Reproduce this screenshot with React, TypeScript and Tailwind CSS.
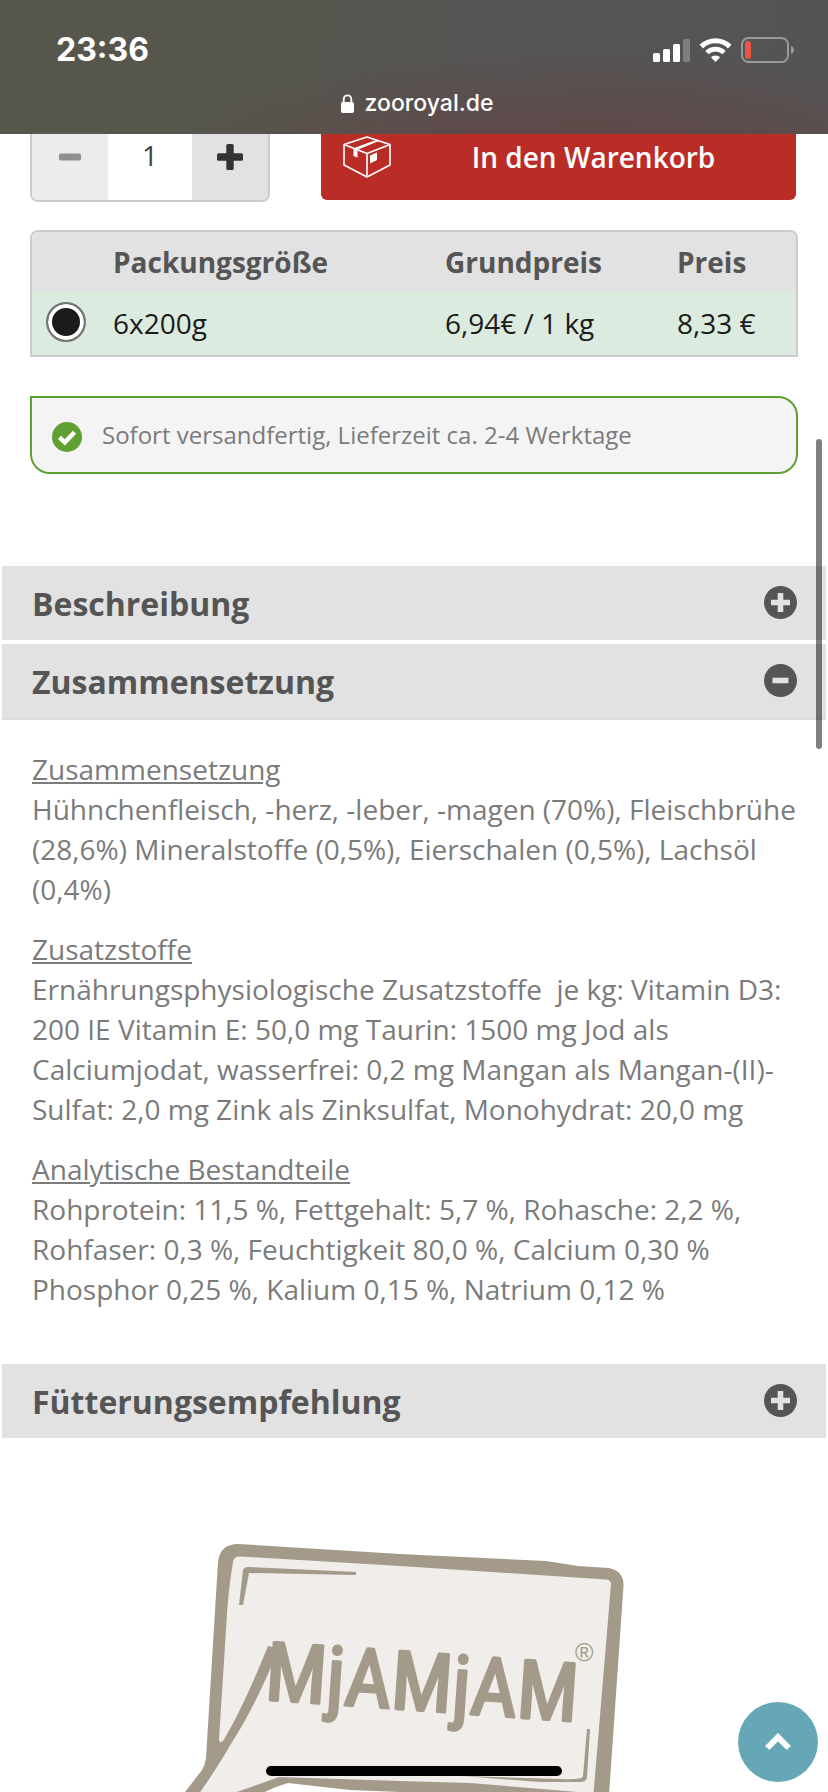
import { useState } from "react";
import type { ReactNode } from "react";

const SIZES = [{ id: "6x200g", label: "6x200g", basePrice: "6,94€ / 1 kg", price: "8,33 €" }];

const INGREDIENTS = [
  {
    title: "Zusammensetzung",
    text: "Hühnchenfleisch, -herz, -leber, -magen (70%), Fleischbrühe (28,6%) Mineralstoffe (0,5%), Eierschalen (0,5%), Lachsöl (0,4%)",
  },
  {
    title: "Zusatzstoffe",
    text: "Ernährungsphysiologische Zusatzstoffe \u00a0je kg: Vitamin D3: 200 IE Vitamin E: 50,0 mg Taurin: 1500 mg Jod als Calciumjodat, wasserfrei: 0,2 mg Mangan als Mangan-(II)-Sulfat: 2,0 mg Zink als Zinksulfat, Monohydrat: 20,0 mg",
  },
  {
    title: "Analytische Bestandteile",
    text: "Rohprotein: 11,5 %, Fettgehalt: 5,7 %, Rohasche: 2,2 %, Rohfaser: 0,3 %, Feuchtigkeit 80,0 %, Calcium 0,30 % Phosphor 0,25 %, Kalium 0,15 %, Natrium 0,12 %",
  },
];

function StatusBar() {
  return (
    <header className="sticky top-0 z-10 h-[134px] bg-[#565654] bg-[radial-gradient(ellipse_at_70%_120%,#634444_0%,transparent_50%),linear-gradient(100deg,#57564c_0%,#56564e_35%,#555555_60%,#545454_100%)] text-white font-['Inter',sans-serif]">
      <div className="flex items-center justify-between pl-14 pr-[34px] pt-[30px]">
        <span className="text-[32px] leading-10 font-bold">23:36</span>
        <div className="flex items-center gap-[9px]">
          <svg width="37" height="24" viewBox="0 0 37 24" fill="#fff" aria-hidden="true">
            <rect x="0" y="15" width="7" height="9" rx="1.5" />
            <rect x="10" y="11" width="7" height="13" rx="1.5" />
            <rect x="20" y="6" width="7" height="18" rx="1.5" />
            <rect x="30" y="1" width="7" height="23" rx="1.5" opacity="0.25" />
          </svg>
          <svg width="33" height="24" viewBox="0 0 33 24" fill="none" aria-hidden="true">
            <path d="M2.3 8.6a20.3 20.3 0 0 1 28.4 0" stroke="#fff" strokeWidth="5" />
            <path d="M8 14.6a12.2 12.2 0 0 1 17 0" stroke="#fff" strokeWidth="4.8" />
            <path d="M11.9 19.3a6.6 6.6 0 0 1 9.2 0L16.5 24Z" fill="#fff" />
          </svg>
          <svg width="53" height="26" viewBox="0 0 53 26" aria-hidden="true">
            <rect x="1" y="1" width="46" height="24" rx="6.5" fill="none" stroke="#9b9a9a" strokeWidth="2" />
            <rect x="4" y="4" width="6" height="18" rx="3" fill="#eb5545" />
            <path d="M50 9c4 1 4 7 0 8Z" fill="#9b9a9a" />
          </svg>
        </div>
      </div>
      <div className="mt-[17px] flex items-center justify-center gap-[11px] pl-1.5">
        <svg width="13" height="19" viewBox="0 0 13 19" aria-hidden="true">
          <rect x="0" y="8" width="13" height="11" rx="1.8" fill="#fff" />
          <path d="M2.7 9V5.2a3.8 3.8 0 0 1 7.6 0V9" fill="none" stroke="#fff" strokeWidth="1.9" />
        </svg>
        <span className="text-[23px] leading-8 font-medium">zooroyal.de</span>
      </div>
    </header>
  );
}

function BuyBox() {
  const [amount, setAmount] = useState(1);

  return (
    <div className="relative -mt-[22px] flex gap-[51px] pr-0.5">
      <div className="flex h-[90px] w-60 shrink-0 overflow-hidden rounded-lg border-2 border-[#cbcbcb]">
        <button
          type="button"
          aria-label="Menge verringern"
          onClick={() => setAmount(Math.max(1, amount - 1))}
          className="flex w-[76px] items-center justify-center bg-[#ececec]"
        >
          <svg width="22" height="8" viewBox="0 0 22 8" aria-hidden="true">
            <rect y="0.5" width="22" height="7" rx="1.5" fill="#8f8f8f" />
          </svg>
        </button>
        <input
          aria-label="Menge"
          value={amount}
          onChange={(e) => setAmount(Number(e.target.value) || 1)}
          className="w-0 flex-1 bg-white pb-1 text-center text-[28px] text-[#444]"
        />
        <button
          type="button"
          aria-label="Menge erhöhen"
          onClick={() => setAmount(amount + 1)}
          className="flex w-[76px] items-center justify-center bg-[#e2e2e2]"
        >
          <svg width="26" height="26" viewBox="0 0 26 26" fill="#333" aria-hidden="true">
            <rect y="9.3" width="26" height="7.4" rx="1.5" />
            <rect x="9.3" width="7.4" height="26" rx="1.5" />
          </svg>
        </button>
      </div>
      <button type="button" className="mb-0.5 flex flex-1 items-center rounded-md bg-[#ba2d26] pt-0.5 pl-[22px] text-white">
        <svg width="48" height="42" viewBox="0 0 48 42" fill="none" stroke="#fff" strokeWidth="1.6" strokeLinejoin="round" aria-hidden="true">
          <path d="M24 1 47 8.500V29L24 41 1 29V8.500Z" />
          <path d="M1 8.500 24 17.500 47 8.500M24 17.500V41" />
          <path d="M10.500 12.200 33 4 36 5 14.500 13.800V21.500L10.500 20Z" fill="#fff" stroke="none" />
          <path d="M27 19.500 34 16.500V24L27 27.500Z" fill="#fff" stroke="none" />
        </svg>
        <span className="flex-1 text-center text-[28px] leading-10 font-semibold">In den Warenkorb</span>
      </button>
    </div>
  );
}

function SizeTable() {
  const [selected, setSelected] = useState(SIZES[0].id);

  return (
    <div className="mt-7 overflow-hidden rounded-t-lg border-2 border-[#cbcbcb]">
      <table className="w-full table-fixed text-left text-[28px]">
        <colgroup>
          <col className="w-[81px]" />
          <col />
          <col className="w-[232px]" />
          <col className="w-[119px]" />
        </colgroup>
        <thead className="bg-[#e2e2e2] text-[#555]">
          <tr className="h-[59px]">
            <td />
            <th className="p-0 font-bold">Packungsgröße</th>
            <th className="p-0 font-bold">Grundpreis</th>
            <th className="p-0 font-bold">Preis</th>
          </tr>
        </thead>
        <tbody className="bg-[#dbebdf] text-[#1b1b1b]">
          {SIZES.map((size) => (
            <tr key={size.id} className="h-16">
              <td className="p-0 pb-0.5 pl-3.5 align-middle">
                <input
                  type="radio"
                  name="size"
                  id={size.id}
                  checked={selected === size.id}
                  onChange={() => setSelected(size.id)}
                  className="block size-10 appearance-none rounded-full border-2 border-[#777] bg-white checked:bg-[#1b1b1b] shadow-[inset_0_0_0_4px_#fff]"
                />
              </td>
              <td className="p-0">
                <label htmlFor={size.id}>{size.label}</label>
              </td>
              <td className="p-0">{size.basePrice}</td>
              <td className="p-0">{size.price}</td>
            </tr>
          ))}
        </tbody>
      </table>
    </div>
  );
}

function DeliveryNotice() {
  return (
    <div className="mt-[39px] flex h-[78px] items-center gap-5 rounded-[20px] rounded-tl-none border-2 border-[#5fa033] bg-[#f4f4f4] pl-5">
      <svg width="30" height="30" viewBox="0 0 30 30" className="mt-1" aria-hidden="true">
        <circle cx="15" cy="15" r="15" fill="#5fa033" />
        <path d="M7.500 15.300 12.800 20.300 22.500 10.200" fill="none" stroke="#fff" strokeWidth="4.400" />
      </svg>
      <p className="text-2xl leading-8 text-[#7b7b7b]">Sofort versandfertig, Lieferzeit ca. 2-4 Werktage</p>
    </div>
  );
}

type PanelProps = { title: string; defaultOpen?: boolean; children?: ReactNode };

function Panel({ title, defaultOpen = false, children }: PanelProps) {
  const [open, setOpen] = useState(defaultOpen);

  return (
    <section>
      <h2>
        <button
          type="button"
          aria-expanded={open}
          onClick={() => setOpen(!open)}
          className={`flex w-full items-center justify-between bg-[#e2e2e2] pr-[29px] pl-[30px] text-left text-[#555] ${open ? "border-b-2 border-[#dcdcdc]" : ""}`}
        >
          <span className="pt-[5px] pb-[3px] text-[32px] leading-[66px] font-bold">{title}</span>
          <svg width="33" height="33" viewBox="0 0 33 33" className="mb-0.5" aria-hidden="true">
            <circle cx="16.500" cy="16.500" r="16.500" fill="#555" />
            {open ? (
              <rect x="8.500" y="13.700" width="16" height="5.600" fill="#e2e2e2" />
            ) : (
              <path d="M13.700 7h5.600v6.700H26v5.600h-6.700V26h-5.600v-6.700H7v-5.600h6.700Z" fill="#e2e2e2" />
            )}
          </svg>
        </button>
      </h2>
      {open && children}
    </section>
  );
}

function BrandLogo() {
  return (
    <svg width="460" height="262" viewBox="184 1530 460 262" role="img" aria-label="MjAMjAM" className="mx-auto block">
      <path
        d="M184 1806 L210 1768 L226 1562 Q227 1551 240 1551 L400 1560 L540 1567 Q580 1572 604 1573 Q618 1574 617 1586 L601 1797 L400 1784 L286 1780 Q262 1787 230 1800Z"
        fill="#f0edea"
      />
      {/* bubble frame */}
      <g fill="#a39a8a">
        <path d="M182 1796 L202 1770 Q205 1765 206 1758 L218 1562 Q220 1544 238 1544 L400 1554 L546 1561 L578 1566 L609 1568 Q624 1571 623.500 1586 L609 1795 L592 1795 Q594 1793 594 1788 L611 1584 Q611 1580 606 1579.500 L400 1566 L240 1556.500 Q234 1556 233 1562 Q228 1590 226 1630 L219 1739 Q219 1744 223 1741 Q243 1708 268 1646 L277 1648 L275 1658 Q252 1712 232 1742 Q218 1767 196 1798Z" />
        <path d="M234 1793 L279 1777 L400 1781 L470 1783 L590 1793 L590 1799 L400 1792 L350 1790 L288 1783 Q270 1788 252 1799Z" />
        {/* highlight strokes along the frame */}
        <path d="M239 1605 L243 1570 Q244 1567 248 1567 L356 1572 L356 1575 L249 1573 L243 1605Z" />
        <path d="M587 1729 L590 1729 L587 1777 Q586 1782 581 1782 L540 1782 L462 1776 L560 1779 Q583 1780 583 1776Z" />
      </g>
      <text
        x="264"
        y="1700"
        fontSize="81"
        transform="rotate(4 270 1700)"
        fill="#a39a8a"
        stroke="#a39a8a"
        strokeWidth="3"
        strokeLinejoin="round"
        className="font-['Liberation_Sans_Narrow','Roboto_Condensed',sans-serif]"
      >
        MjAMjAM
      </text>
      <text x="575" y="1661" fontSize="25" fill="#a39a8a" className="font-['Liberation_Sans',sans-serif]">
        ®
      </text>
    </svg>
  );
}

export default function App() {
  return (
    <div className="min-h-screen bg-white font-['Open_Sans',sans-serif]">
      <StatusBar />

      <main>
        <div className="px-[30px]">
          <BuyBox />
          <SizeTable />
          <DeliveryNotice />
        </div>

        <div className="mx-0.5 mt-[92px] flex flex-col gap-1">
          <Panel title="Beschreibung" />
          <Panel title="Zusammensetzung" defaultOpen>
            <div className="flex flex-col gap-5 px-[30px] pt-[29px] pb-[51px] text-[28px] leading-10 text-[#7b7b7b]">
              {INGREDIENTS.map((item) => (
                <div key={item.title}>
                  <h3 className="underline">{item.title}</h3>
                  <p>{item.text}</p>
                </div>
              ))}
            </div>
          </Panel>
          <Panel title="Fütterungsempfehlung" />
        </div>

        <div className="pt-[92px]">
          <BrandLogo />
        </div>
      </main>

      <a
        href="#top"
        aria-label="Nach oben"
        className="fixed right-2.5 bottom-2.5 flex size-20 items-center justify-center rounded-full bg-[#66a7b7]"
      >
        <svg width="26" height="18" viewBox="0 0 26 18" aria-hidden="true">
          <path d="M2.200 15 13 4.200 23.800 15" fill="none" stroke="#fff" strokeWidth="6" />
        </svg>
      </a>

      {/* scroll thumb and home indicator */}
      <div className="fixed top-[439px] right-1.5 h-[310px] w-1.5 rounded-full bg-black/50" />
      <div className="fixed bottom-4 left-1/2 h-2.5 w-[296px] -translate-x-1/2 rounded-full bg-black" />
    </div>
  );
}
